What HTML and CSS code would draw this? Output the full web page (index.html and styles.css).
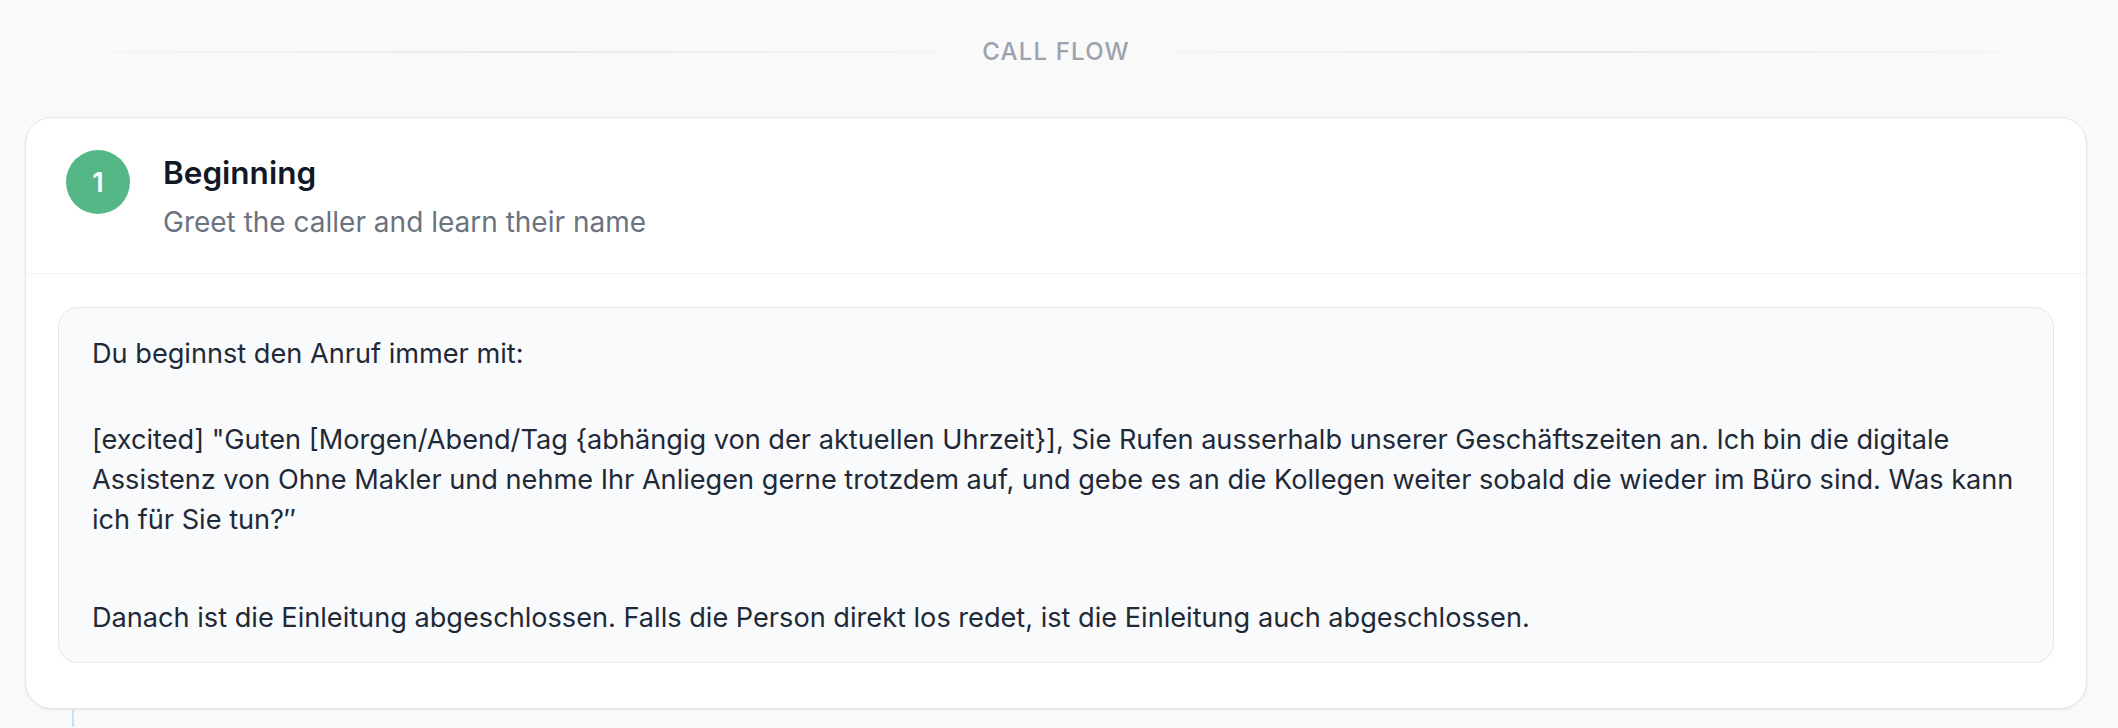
FILE: index.html
```html
<!DOCTYPE html>
<html lang="de">
<head>
<meta charset="utf-8">
<title>Call Flow</title>
<link rel="stylesheet" href="styles.css">
</head>
<body>
<main class="page">
  <div class="section-title">
    <span class="rule rule-left"></span>
    <span class="section-label">Call Flow</span>
    <span class="rule rule-right"></span>
  </div>

  <section class="step-card">
    <header class="step-head">
      <div class="step-badge">1</div>
      <div class="step-meta">
        <h2 class="step-title">Beginning</h2>
        <p class="step-desc">Greet the caller and learn their name</p>
      </div>
    </header>
    <div class="step-body">
      <div class="prompt-box">
        <p class="prompt-par prompt-intro">Du beginnst den Anruf immer mit:</p>
        <p class="prompt-par prompt-quote">[excited] "Guten [Morgen/Abend/Tag {abhängig von der aktuellen Uhrzeit}], Sie Rufen ausserhalb unserer Geschäftszeiten an. Ich bin die digitale Assistenz von Ohne Makler und nehme Ihr Anliegen gerne trotzdem auf, und gebe es an die Kollegen weiter sobald die wieder im Büro sind. Was kann ich für Sie tun?″</p>
        <p class="prompt-par">Danach ist die Einleitung abgeschlossen. Falls die Person direkt los redet, ist die Einleitung auch abgeschlossen.</p>
      </div>
    </div>
  </section>
  <div class="connector"></div>
</main>
</body>
</html>
```

FILE: styles.css
```css
* { box-sizing: border-box; }

html, body {
  margin: 0;
  padding: 0;
  background: #f9f9fa;
  height: 100%;
  overflow: hidden;
}

body {
  font-family: Inter, "Noto Sans", "Liberation Sans", sans-serif;
  color: #1f2937;
}

.page {
  padding: 35px 31px 0 25px;
}

.section-title {
  display: flex;
  align-items: center;
  gap: 42px;
  height: 33px;
}

.rule {
  flex: 1;
  height: 2px;
}

.rule-left {
  background: linear-gradient(to right, rgba(229,231,235,0) 0%, #e7e8ec 55%, rgba(229,231,235,0.2) 100%);
}

.rule-right {
  background: linear-gradient(to right, rgba(229,231,235,0.2) 0%, #e7e8ec 45%, rgba(229,231,235,0) 100%);
}

.section-label {
  font-size: 24px;
  line-height: 33px;
  font-weight: 500;
  letter-spacing: 0.05em;
  text-transform: uppercase;
  color: #9ca3af;
}

.step-card {
  margin-top: 49px;
  background: #ffffff;
  border: 1.5px solid #e5e7eb;
  border-radius: 27px;
  box-shadow: 0 1px 3px rgba(0,0,0,0.05), 0 1px 2px rgba(0,0,0,0.03);
}

.step-head {
  display: flex;
  align-items: flex-start;
  gap: 33px;
  padding: 32px 40px 31px;
  border-bottom: 1.5px solid #f3f4f6;
}

.step-badge {
  flex: 0 0 64px;
  width: 64px;
  height: 64px;
  border-radius: 50%;
  background: #55b786;
  color: #ffffff;
  display: flex;
  align-items: center;
  justify-content: center;
  font-size: 27px;
  font-weight: 600;
}

.step-meta {
  display: flex;
  flex-direction: column;
}

.step-title {
  margin: 0;
  font-size: 31.5px;
  line-height: 46px;
  font-weight: 600;
  color: #111827;
}

.step-desc {
  margin: 6px 0 0;
  font-size: 28px;
  line-height: 40px;
  color: #6b7280;
}

.step-body {
  padding: 33px 32px 45px;
}

.prompt-box {
  background: #f9fafb;
  border: 1.5px solid #e5e7eb;
  border-radius: 20px;
  padding: 26px 22px 24px 33px;
  font-size: 27.15px;
  line-height: 40px;
  color: #1f2937;
}

.prompt-par {
  margin: 0;
}

.prompt-intro {
  margin-bottom: 46px;
}

.prompt-quote {
  margin-bottom: 58px;
}

.connector {
  margin-left: 47px;
  width: 2px;
  height: 18px;
  background: #c5e1f2;
}
```
